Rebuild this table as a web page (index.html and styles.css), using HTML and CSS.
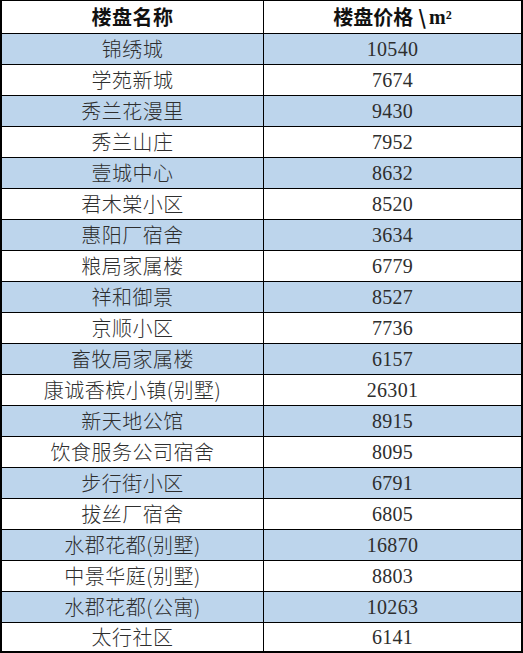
FILE: index.html
```html
<!DOCTYPE html>
<html lang="zh-CN">
<head>
<meta charset="utf-8">
<title>楼盘价格</title>
<link rel="stylesheet" href="styles.css">
</head>
<body>
<div class="sheet">
  <div class="row head"><div class="c name">楼盘名称</div><div class="c price">楼盘价格<span class="slash">\</span><span class="unit">m²</span></div></div>
  <div class="row alt"><div class="c name">锦绣城</div><div class="c price">10540</div></div>
  <div class="row"><div class="c name">学苑新城</div><div class="c price">7674</div></div>
  <div class="row alt"><div class="c name">秀兰花漫里</div><div class="c price">9430</div></div>
  <div class="row"><div class="c name">秀兰山庄</div><div class="c price">7952</div></div>
  <div class="row alt"><div class="c name">壹城中心</div><div class="c price">8632</div></div>
  <div class="row"><div class="c name">君木棠小区</div><div class="c price">8520</div></div>
  <div class="row alt"><div class="c name">惠阳厂宿舍</div><div class="c price">3634</div></div>
  <div class="row"><div class="c name">粮局家属楼</div><div class="c price">6779</div></div>
  <div class="row alt"><div class="c name">祥和御景</div><div class="c price">8527</div></div>
  <div class="row"><div class="c name">京顺小区</div><div class="c price">7736</div></div>
  <div class="row alt"><div class="c name">畜牧局家属楼</div><div class="c price">6157</div></div>
  <div class="row"><div class="c name">康诚香槟小镇(别墅)</div><div class="c price">26301</div></div>
  <div class="row alt"><div class="c name">新天地公馆</div><div class="c price">8915</div></div>
  <div class="row"><div class="c name">饮食服务公司宿舍</div><div class="c price">8095</div></div>
  <div class="row alt"><div class="c name">步行街小区</div><div class="c price">6791</div></div>
  <div class="row"><div class="c name">拔丝厂宿舍</div><div class="c price">6805</div></div>
  <div class="row alt"><div class="c name">水郡花都(别墅)</div><div class="c price">16870</div></div>
  <div class="row"><div class="c name">中景华庭(别墅)</div><div class="c price">8803</div></div>
  <div class="row alt"><div class="c name">水郡花都(公寓)</div><div class="c price">10263</div></div>
  <div class="row last"><div class="c name">太行社区</div><div class="c price">6141</div></div>
</div>
</body>
</html>
```

FILE: styles.css
```css
html, body {
  margin: 0;
  padding: 0;
  background: #fff;
}
.sheet {
  width: 523px;
  box-sizing: border-box;
  border: 2px solid #000;
  border-top-width: 1px;
  font-family: "Noto Sans CJK SC", sans-serif;
  color: #2e2e2e;
  font-size: 20px;
}
.row {
  display: flex;
  height: 31px;
  box-sizing: border-box;
  border-bottom: 1px solid #000;
  background: #fff;
}
.row.alt {
  background: #bdd5ec;
}
.row.head {
  height: 33px;
  font-weight: 700;
  color: #111;
}
.row.last {
  height: 28px;
  border-bottom: none;
}
.c {
  display: flex;
  align-items: center;
  justify-content: center;
  box-sizing: border-box;
  line-height: 1;
  white-space: nowrap;
}
.name {
  width: 262px;
  border-right: 1px solid #000;
  font-weight: 300;
  letter-spacing: 0.5px;
}
.head .name {
  font-weight: 700;
}
.price {
  flex: 1;
  font-family: "Liberation Serif", "Noto Sans CJK SC", serif;
  letter-spacing: 0.3px;
}
.head .price {
  font-family: "Noto Sans CJK SC", sans-serif;
  letter-spacing: 0;
}
.slash {
  margin: 0 3px 0 5px;
}
.unit {
  font-family: "Liberation Serif", serif;
}
```
